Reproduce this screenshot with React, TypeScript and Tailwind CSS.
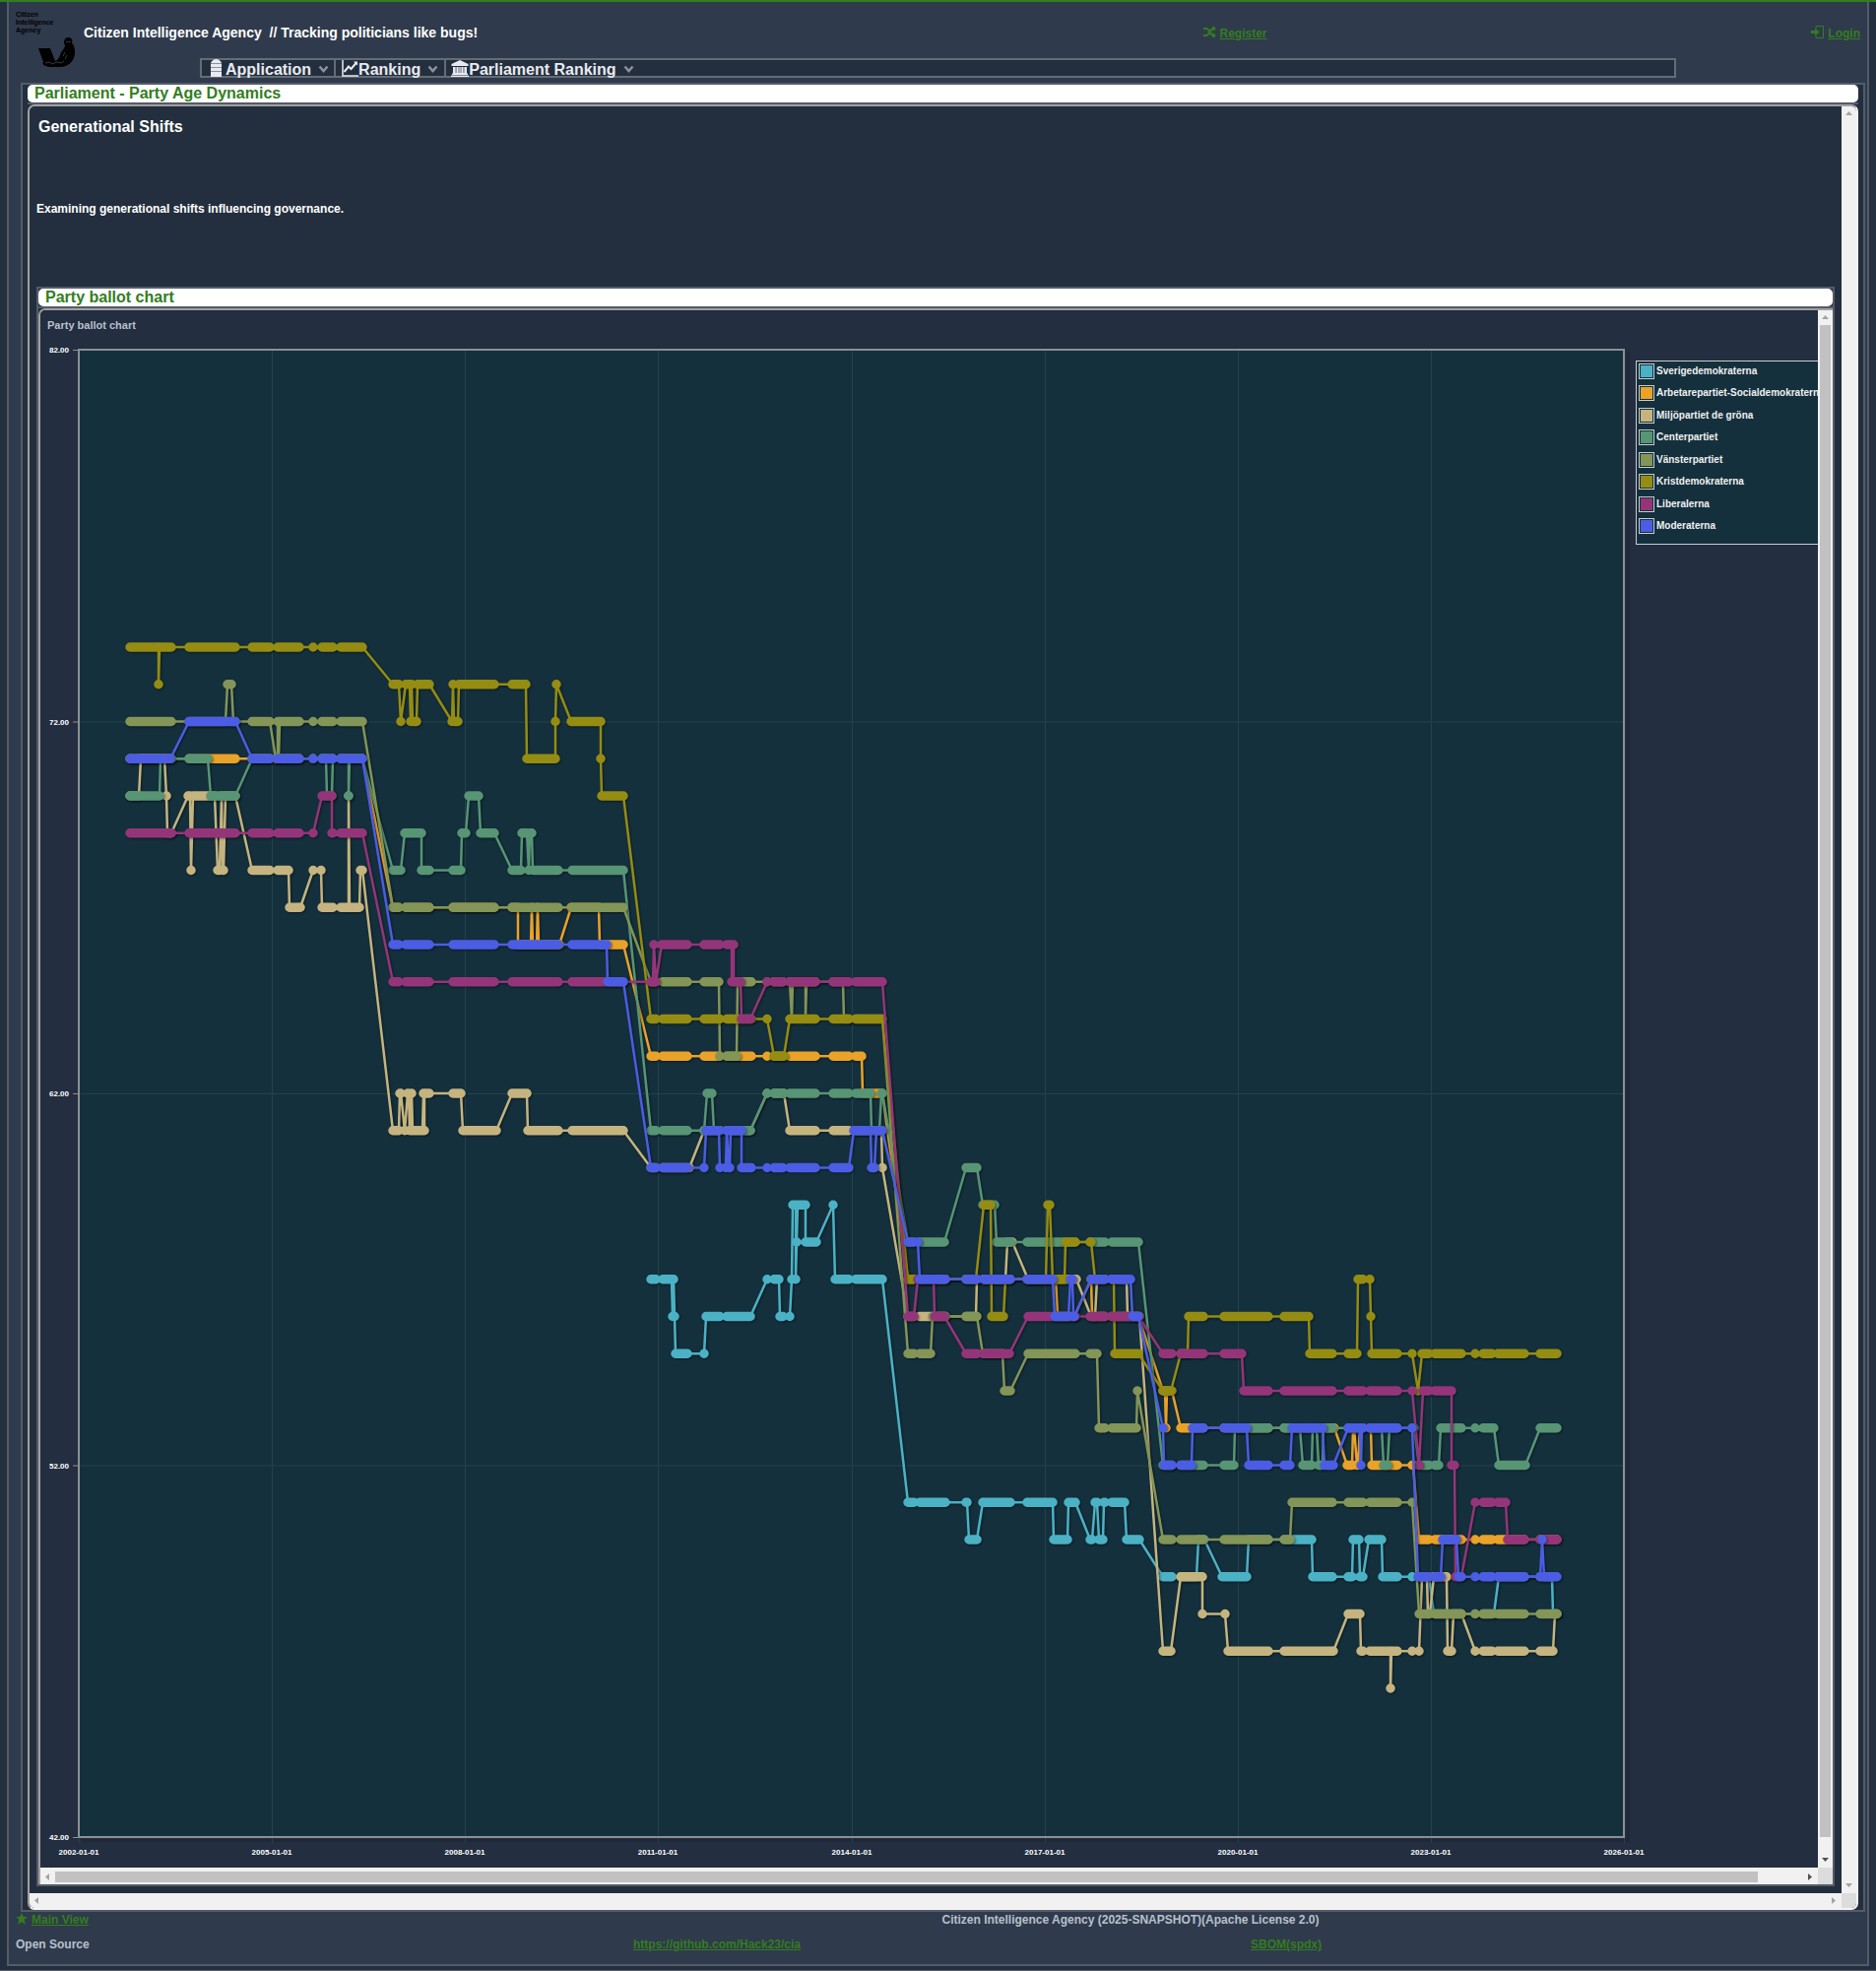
import type { ReactNode } from "react";

type Run = [from: number, to: number, age: number];

interface Series {
  name: string;
  color: string;
  swatch: string;
  runs: Run[];
}

/* Stretches of the time axis in which the parliament was in session. */
const SESSIONS: [number, number][] = [
  [132, 174], [192, 239], [256, 274], [282, 304], [318, 318], [327, 338], [346, 369],
  [399, 405], [412, 436], [460, 502], [520, 567], [581, 633],
  [661, 666], [673, 698], [715, 731], [738, 763], [779, 779], [786, 795], [802, 828],
  [846, 862], [869, 896], [922, 928], [934, 960], [981, 992], [999, 1026], [1043, 1092],
  [1107, 1122], [1129, 1157], [1181, 1190], [1199, 1222], [1243, 1288], [1304, 1353],
  [1369, 1384], [1391, 1419], [1434, 1434], [1441, 1451], [1457, 1484], [1498, 1498],
  [1506, 1515], [1521, 1548], [1564, 1582],
];

const SERIES: Series[] = [
  {
    name: "Sverigedemokraterna",
    color: "#4bb2c5",
    swatch: "bg-[#4bb2c5]",
    runs: [
      [661, 682, 57], [683, 683, 56], [684, 684, 57], [685, 685, 56], [686, 715, 55], [717, 762, 56],
      [779, 791, 57], [792, 802, 56], [804, 804, 57], [805, 808, 59], [808, 808, 57], [809, 809, 58],
      [810, 818, 59], [818, 829, 58], [846, 846, 59], [848, 896, 57], [922, 982, 51], [984, 992, 50],
      [998, 1069, 51], [1070, 1084, 50], [1085, 1092, 51], [1107, 1109, 50], [1112, 1114, 51],
      [1116, 1120, 50], [1121, 1142, 51], [1144, 1157, 50], [1181, 1215, 49], [1217, 1223, 50],
      [1241, 1266, 49], [1268, 1332, 50], [1333, 1373, 49], [1374, 1380, 50], [1381, 1384, 49],
      [1390, 1403, 50], [1404, 1451, 49], [1456, 1517, 48], [1522, 1576, 49], [1577, 1581, 48],
    ],
  },
  {
    name: "Arbetarepartiet-Socialdemokraterna",
    color: "#eaa228",
    swatch: "bg-[#eaa228]",
    runs: [
      [132, 368, 71], [399, 526, 67], [526, 539, 66], [540, 540, 67], [541, 545, 66], [546, 546, 67],
      [547, 568, 66], [580, 608, 67], [609, 633, 66], [661, 875, 63], [876, 896, 62], [922, 1072, 57],
      [1074, 1091, 56], [1108, 1108, 57], [1109, 1156, 56], [1181, 1183, 54], [1184, 1184, 53],
      [1185, 1190, 54], [1199, 1355, 53], [1368, 1373, 52], [1374, 1375, 53], [1378, 1379, 52],
      [1381, 1392, 53], [1393, 1435, 52], [1441, 1581, 50],
    ],
  },
  {
    name: "Miljöpartiet de gröna",
    color: "#c5b47f",
    swatch: "bg-[#c5b47f]",
    runs: [
      [132, 141, 70], [143, 167, 71], [169, 169, 70], [170, 174, 69], [191, 193, 70], [194, 194, 68],
      [196, 218, 70], [221, 223, 68], [225, 225, 70], [226, 227, 68], [229, 239, 70], [256, 293, 68],
      [294, 305, 67], [318, 326, 68], [327, 354, 67], [354, 354, 70], [355, 365, 67], [366, 368, 68],
      [399, 405, 61], [406, 407, 62], [411, 411, 61], [414, 415, 62], [416, 416, 61], [418, 418, 62],
      [419, 429, 61], [430, 430, 62], [431, 431, 61], [431, 468, 62], [470, 504, 61], [520, 535, 62],
      [536, 633, 61], [661, 700, 60], [715, 762, 61], [779, 796, 62], [802, 895, 61], [896, 896, 60],
      [922, 991, 56], [992, 1021, 57], [1023, 1028, 58], [1044, 1093, 57], [1108, 1112, 56],
      [1114, 1144, 57], [1145, 1157, 56], [1181, 1189, 47], [1199, 1221, 49], [1221, 1221, 48],
      [1244, 1244, 48], [1247, 1354, 47], [1369, 1381, 48], [1382, 1412, 47], [1412, 1412, 46],
      [1413, 1441, 47], [1444, 1449, 49], [1450, 1452, 48], [1456, 1469, 49], [1470, 1474, 47],
      [1476, 1484, 48], [1498, 1577, 47], [1579, 1581, 48],
    ],
  },
  {
    name: "Centerpartiet",
    color: "#579575",
    swatch: "bg-[#579575]",
    runs: [
      [132, 162, 70], [163, 211, 71], [214, 239, 70], [256, 331, 71], [332, 337, 70], [338, 354, 71],
      [354, 354, 70], [355, 368, 71], [399, 407, 68], [411, 428, 69], [428, 468, 68], [469, 473, 69],
      [476, 486, 70], [488, 502, 69], [520, 529, 68], [530, 535, 69], [537, 537, 68], [538, 540, 69],
      [541, 633, 68], [661, 715, 61], [718, 723, 62], [725, 762, 61], [779, 884, 62], [885, 893, 61],
      [895, 896, 62], [922, 959, 58], [981, 992, 60], [998, 1010, 59], [1012, 1156, 58],
      [1181, 1253, 52], [1254, 1320, 53], [1323, 1332, 52], [1333, 1337, 53], [1339, 1343, 52],
      [1344, 1403, 53], [1405, 1409, 52], [1411, 1436, 53], [1441, 1461, 52], [1463, 1517, 53],
      [1522, 1549, 52], [1564, 1581, 53],
    ],
  },
  {
    name: "Vänsterpartiet",
    color: "#839557",
    swatch: "bg-[#839557]",
    runs: [
      [132, 229, 72], [231, 235, 73], [237, 274, 72], [280, 282, 71], [282, 282, 72], [283, 283, 71],
      [284, 368, 72], [399, 633, 67], [661, 730, 65], [731, 748, 63], [749, 802, 65], [804, 804, 64],
      [805, 818, 65], [818, 818, 64], [819, 856, 65], [857, 896, 64], [922, 945, 55], [947, 992, 56],
      [998, 1018, 55], [1020, 1026, 54], [1044, 1114, 55], [1116, 1154, 53], [1155, 1155, 54],
      [1181, 1310, 50], [1312, 1434, 51], [1441, 1581, 48],
    ],
  },
  {
    name: "Kristdemokraterna",
    color: "#958c12",
    swatch: "bg-[#958c12]",
    runs: [
      [132, 161, 74], [161, 161, 73], [162, 368, 74], [399, 405, 73], [407, 407, 72], [412, 416, 73],
      [417, 417, 72], [418, 418, 73], [419, 423, 72], [424, 436, 73], [459, 459, 72], [460, 460, 73],
      [461, 465, 72], [466, 534, 73], [535, 564, 71], [564, 564, 72], [565, 565, 73], [580, 610, 72],
      [610, 610, 71], [611, 633, 70], [661, 779, 64], [786, 796, 63], [802, 896, 64], [922, 991, 57],
      [999, 1006, 59], [1007, 1019, 56], [1021, 1062, 57], [1064, 1066, 59], [1069, 1081, 57],
      [1082, 1108, 58], [1112, 1131, 57], [1132, 1156, 55], [1181, 1189, 54], [1199, 1206, 55],
      [1207, 1329, 56], [1330, 1378, 55], [1379, 1391, 57], [1392, 1392, 56], [1393, 1434, 55],
      [1440, 1440, 54], [1444, 1581, 55],
    ],
  },
  {
    name: "Liberalerna",
    color: "#953579",
    swatch: "bg-[#953579]",
    runs: [
      [132, 318, 69], [327, 337, 70], [337, 368, 69], [399, 663, 65], [664, 664, 66], [666, 666, 65],
      [672, 743, 66], [743, 743, 65], [745, 745, 66], [745, 752, 65], [753, 762, 64], [779, 896, 65],
      [922, 928, 56], [932, 948, 57], [949, 959, 56], [981, 1025, 55], [1044, 1156, 56],
      [1181, 1261, 55], [1263, 1434, 54], [1441, 1441, 52], [1445, 1474, 54], [1474, 1477, 52],
      [1478, 1484, 49], [1498, 1529, 51], [1531, 1581, 50],
    ],
  },
  {
    name: "Moderaterna",
    color: "#4b5de4",
    swatch: "bg-[#4b5de4]",
    runs: [
      [132, 173, 71], [192, 239, 72], [256, 368, 71], [399, 616, 66], [617, 633, 65], [661, 715, 60],
      [717, 730, 61], [731, 737, 60], [738, 738, 61], [740, 741, 60], [742, 753, 61], [753, 862, 60],
      [867, 884, 61], [885, 888, 60], [890, 896, 61], [922, 932, 58], [934, 1069, 57], [1071, 1085, 56],
      [1087, 1089, 57], [1090, 1091, 56], [1108, 1148, 57], [1150, 1156, 56], [1181, 1181, 53],
      [1182, 1210, 52], [1211, 1266, 53], [1268, 1310, 52], [1312, 1343, 53], [1345, 1354, 52],
      [1369, 1381, 53], [1382, 1382, 52], [1383, 1434, 53], [1440, 1463, 49], [1465, 1479, 50],
      [1481, 1564, 49], [1566, 1566, 50], [1568, 1581, 49],
    ],
  },
];

const LEFT = 80;
const RIGHT = 1649;
const TOP = 355;
const BOTTOM = 1865;

const ageToY = (age: number) => TOP + ((82 - age) * (BOTTOM - TOP)) / 40;

const linePath = (runs: Run[]) =>
  runs.map(([a, b, v], i) => `${i ? "L" : "M"}${a} ${ageToY(v)}L${b} ${ageToY(v)}`).join("");

const markerPath = (runs: Run[]) =>
  runs
    .map(([a, b, v]) => {
      const y = ageToY(v);
      const ends = `M${a} ${y}h0.01M${b} ${y}h0.01`;
      const spans = SESSIONS.map(([s, e]) => {
        const from = Math.max(a, s);
        const to = Math.min(b, e);
        return to >= from ? `M${from} ${y}H${to + 0.01}` : "";
      }).join("");
      return ends + spans;
    })
    .join("");

const X_TICKS = [2002, 2005, 2008, 2011, 2014, 2017, 2020, 2023, 2026];
const Y_TICKS = [82, 72, 62, 52, 42];
const tickX = (year: number) => Math.round(LEFT + ((year - 2002) * (RIGHT - LEFT)) / 24);

function Plot() {
  return (
    <svg
      viewBox="41 342 1619 1554"
      role="img"
      aria-label="Party ballot chart"
      className="block h-auto min-w-0 flex-1 overflow-visible font-bold"
    >
      <g fill="none" stroke="#000" strokeOpacity="0.12">
        <path d="M82 1867.5H1652.5V356M83 1868.5H1653.5V357M84 1869.5H1654.5V358" />
      </g>
      <rect x={LEFT} y={TOP} width={RIGHT - LEFT} height={BOTTOM - TOP} fill="#14303d" />
      {X_TICKS.map((year) => (
        <path key={year} d={`M${tickX(year) + 0.5} ${TOP}V1871`} stroke="#23434b" />
      ))}
      {Y_TICKS.map((age) => (
        <path key={age} d={`M${LEFT} ${ageToY(age) + 0.5}H${RIGHT}`} stroke="#23434b" />
      ))}
      <rect
        x={LEFT}
        y={TOP}
        width={RIGHT - LEFT}
        height={BOTTOM - TOP}
        fill="none"
        stroke="#8c9092"
        strokeWidth="2"
      />
      {Y_TICKS.map((age) => (
        <path key={age} d={`M74 ${ageToY(age) + 0.5}H79`} stroke="#8c9092" />
      ))}
      {SERIES.map((s) => (
        <g
          key={s.name}
          fill="none"
          stroke={s.color}
          strokeLinecap="round"
          strokeLinejoin="round"
          className="drop-shadow-[1px_1px_1px_rgba(0,0,0,0.45)]"
        >
          <path d={linePath(s.runs)} strokeWidth="2.5" />
          <path d={markerPath(s.runs)} strokeWidth="9.5" />
        </g>
      ))}
      <g fill="#fff" fontSize="8">
        {Y_TICKS.map((age) => (
          <text key={age} x="70" y={ageToY(age) + 3} textAnchor="end">
            {age}.00
          </text>
        ))}
        {X_TICKS.map((year) => (
          <text key={year} x={tickX(year)} y="1883" textAnchor="middle">
            {year}-01-01
          </text>
        ))}
      </g>
    </svg>
  );
}

function Legend() {
  return (
    <ul className="mt-6 h-[187px] w-[200px] shrink-0 border border-[#ccc] bg-[#14303d] pt-[2px] pl-[2px] text-[10px] leading-[15px] font-bold text-[#f0f0f0]">
      {SERIES.map((s, i) => (
        <li key={s.name} className={i % 2 ? "flex h-[23px] gap-[2px]" : "flex h-[22px] gap-[2px]"}>
          <span className="size-4 shrink-0 border border-[#ccc] p-px">
            <span className={`block size-full ${s.swatch}`} />
          </span>
          <span className="whitespace-nowrap">{s.name}</span>
        </li>
      ))}
    </ul>
  );
}

function Arrow({ dir, active }: { dir: "up" | "down" | "left" | "right"; active?: boolean }) {
  const d = {
    up: "M4 9L7.500 5L11 9Z",
    down: "M4 5H11L7.500 9Z",
    left: "M9 4V11L5 7.500Z",
    right: "M5 4V11L9 7.500Z",
  }[dir];
  return (
    <svg viewBox="0 0 15 15" className="size-[15px] shrink-0" aria-hidden="true">
      <path d={d} fill={active ? "#505050" : "#a3a3a3"} />
    </svg>
  );
}

function PanelTitle({ children }: { children: ReactNode }) {
  return (
    <h2 className="h-[18px] rounded-[5px] bg-white pl-[7px] text-base leading-[17px] font-bold text-[#337d1e]">
      {children}
    </h2>
  );
}

/* Titled panel whose body carries a vertical and a horizontal scroll bar. */
function ScrollPanel({
  title,
  thumbs,
  rounded,
  className,
  children,
}: {
  title: string;
  thumbs?: boolean;
  rounded?: boolean;
  className: string;
  children: ReactNode;
}) {
  return (
    <section className={`border-2 border-[#545b69] bg-[#232f3e] ${className}`}>
      <PanelTitle>{title}</PanelTitle>
      <div className="h-[2px] bg-[#545b69]" />
      <div
        className={
          rounded
            ? "overflow-hidden rounded-[7px] border-2 border-[#a0a0a0] border-r-[#f4f4f4] border-b-[#f4f4f4]"
            : "overflow-hidden rounded-tl-[7px] border-t-2 border-l-2 border-[#a0a0a0]"
        }
      >
        <div className="grid grid-cols-[minmax(0,1fr)_15px]">
          <div className="min-w-0 overflow-hidden">{children}</div>
          <div className="flex flex-col bg-[#f1f1f1]">
            <Arrow dir="up" />
            <div className="flex flex-1 flex-col px-[2px] pb-4">
              {thumbs && <div className="flex-1 bg-[#c1c1c1]" />}
            </div>
            <Arrow dir="down" active={thumbs} />
          </div>
          <div className={thumbs ? "flex h-[17px] items-end bg-[#f1f1f1]" : "flex h-[15px] bg-[#f1f1f1]"}>
            <Arrow dir="left" />
            <div className="flex h-[15px] flex-1 py-[2px] pr-[46px]">
              {thumbs && <div className="flex-1 bg-[#c1c1c1]" />}
            </div>
            <Arrow dir="right" active={thumbs} />
          </div>
          <div className="bg-[#dcdcdc]" />
        </div>
      </div>
    </section>
  );
}

function Logo() {
  return (
    <svg viewBox="0 0 62 62" className="size-[62px] shrink-0" role="img" aria-label="Citizen Intelligence Agency">
      <g fontSize="7" fontWeight="bold" fill="#000">
        <text x="0" y="7">Citizen</text>
        <text x="0" y="15">Intelligence</text>
        <text x="0" y="23">Agency</text>
      </g>
      <path
        d="M23 39H35L40 52C43 51 44 48 45 46C46 42 50 39 50 36C48 33 49 28 53.500 28C57 28 58 31 57 34C59 35 60 39 60 44C60 50 55 57 47 58H35C29 58 26 54 28 53Z"
        fill="#000"
      />
      <path d="M51 33C53 32 55 32 56 33M30 54L34 53L37 55L42 53L46 54L49 52M50 43L48 47M52 46L50 50" stroke="#56606e" strokeWidth="0.6" fill="none" />
    </svg>
  );
}

function DatabaseIcon() {
  return (
    <svg viewBox="0 0 11 18" className="h-[18px] w-[11px]" aria-hidden="true">
      <path d="M0 4Q2 0 5.500 0T11 4V18H0Z" fill="#e8eaf0" />
      <path d="M0 4.500H11M0 8.500H11M0 12.500H11" stroke="#8b919b" fill="none" />
    </svg>
  );
}

function ChartIcon() {
  return (
    <svg viewBox="0 0 17 17" className="size-[17px]" aria-hidden="true" fill="none" stroke="#e8eaf0">
      <path d="M1 0V16H17" strokeWidth="1.500" />
      <path d="M2.500 12L7 6.500L9.500 9L15 2.500" strokeWidth="2" />
      <path d="M12 1.500H16V5.500Z" fill="#e8eaf0" stroke="none" />
    </svg>
  );
}

function ParliamentIcon() {
  return (
    <svg viewBox="0 0 18 17" className="h-[17px] w-[18px]" aria-hidden="true">
      <path
        d="M9 0L17.500 4V6H0.500V4ZM2 7H4V13H5.500V7H7V13H8.300V7H9.700V13H11V7H12.500V13H14V7H16V13.500H17V15H1V13.500H2ZM0 15.500H18V17H0Z"
        fill="#e8eaf0"
      />
      <path d="M4 7H5.500V13H4ZM7 7H8.300V13H7ZM9.700 7H11V13H9.700ZM12.500 7H14V13H12.500Z" fill="#a5abb5" />
    </svg>
  );
}

function Chevron() {
  return (
    <svg viewBox="0 0 11 8" className="mt-[2px] ml-[7px] h-2 w-[11px]" aria-hidden="true">
      <path d="M1.500 1.500L5.500 6L9.500 1.500" fill="none" stroke="#8b929c" strokeWidth="2.500" />
    </svg>
  );
}

function ShuffleIcon() {
  return (
    <svg viewBox="0 0 13 13" className="mb-1 h-[13px] w-[13px]" aria-hidden="true">
      <path d="M0 3H3C6 3 7 10 10 10H11M0 10H3C6 10 7 3 10 3H11" fill="none" stroke="#337d1e" strokeWidth="2" />
      <path d="M9.500 0L13 3L9.500 6ZM9.500 7L13 10L9.500 13Z" fill="#337d1e" />
    </svg>
  );
}

function LoginIcon() {
  return (
    <svg viewBox="0 0 13 13" className="mb-1 h-[13px] w-[13px]" aria-hidden="true">
      <path d="M5 0.500H12.500V12.500H5V10M5 3V0.500" fill="none" stroke="#337d1e" />
      <path d="M0 5H4V2.500L8.500 6.500L4 10.500V8H0Z" fill="#337d1e" />
    </svg>
  );
}

function StarIcon() {
  return (
    <svg viewBox="0 0 12 12" className="mb-[2px] size-3" aria-hidden="true">
      <path d="M6 0L7.700 4H12L8.600 6.800L9.800 12L6 9L2.200 12L3.400 6.800L0 4H4.300Z" fill="#337d1e" />
    </svg>
  );
}

const LINK = "flex items-center gap-1 text-[#337d1e]";

export default function App() {
  return (
    <div className="min-h-screen border-t-2 border-b-2 border-t-[#337d1e] border-b-[#545b69] bg-[#232f3e] px-[7px] pb-1 font-['Liberation_Sans',Arial,sans-serif] text-[12px] font-bold text-[#b8c0cc]">
      <div className="border-2 border-t-0 border-[#545b69] bg-[#2f3b4c] pb-2">
        <header className="flex h-[57px] items-start pr-[7px] pl-[7px]">
          <div className="h-[57px] w-[69px] shrink-0 pt-2">
            <Logo />
          </div>
          <div className="flex min-w-0 flex-1 items-start pt-[21px]">
            <h1 className="w-[63%] text-[14px] leading-5 whitespace-pre text-white">
              Citizen Intelligence Agency  // Tracking politicians like bugs!
            </h1>
            <a href="#register" className={`${LINK} pt-[2px]`}>
              <ShuffleIcon />
              <span className="underline">Register</span>
            </a>
            <a href="#login" className={`${LINK} ml-auto pt-[2px]`}>
              <LoginIcon />
              <span className="underline">Login</span>
            </a>
          </div>
        </header>

        <nav className="mx-[194px] flex h-5 border-2 border-[#646c75] bg-[#232f3e] text-base leading-4 text-[#e8eaf0]">
          <button type="button" className="flex items-center border-r-2 border-[#646c75] pr-[5px] pl-[9px]">
            <DatabaseIcon />
            <span className="ml-1 pt-[3px]">Application</span>
            <Chevron />
          </button>
          <button type="button" className="flex items-center border-r-2 border-[#646c75] pr-[6px] pl-[6px]">
            <ChartIcon />
            <span className="pt-[3px]">Ranking</span>
            <Chevron />
          </button>
          <button type="button" className="flex items-center pl-[5px]">
            <ParliamentIcon />
            <span className="pt-[3px]">Parliament Ranking</span>
            <Chevron />
          </button>
        </nav>

        <main className="mt-[5px] pr-[2px] pl-3">
          <ScrollPanel title="Parliament - Party Age Dynamics" rounded className="px-[5px]">
            <div className="px-[7px] pb-[7px]">
              <h2 className="pt-[11px] pl-[2px] text-base leading-5 text-white">Generational Shifts</h2>
              <p className="pt-[65px] pb-[71px] leading-4 text-white">
                Examining generational shifts influencing governance.
              </p>
              <ScrollPanel title="Party ballot chart" thumbs className="">
                <div className="bg-[#232e40]">
                  <h3 className="h-[27px] pt-[7px] pl-[7px] text-[11px] leading-4">Party ballot chart</h3>
                  <div className="flex items-start">
                    <Plot />
                    <div className="w-[186px] shrink-0 pl-px">
                      <Legend />
                    </div>
                  </div>
                </div>
              </ScrollPanel>
            </div>
          </ScrollPanel>
        </main>

        <footer className="px-[7px] leading-4">
          <div className="grid grid-cols-2 gap-x-2">
            <a href="#main" className={LINK}>
              <StarIcon />
              <span className="underline">Main View</span>
            </a>
            <span>Citizen Intelligence Agency (2025-SNAPSHOT)(Apache License 2.0)</span>
          </div>
          <div className="mt-[9px] grid grid-cols-3 gap-x-2 pb-1">
            <span>Open Source</span>
            <a href="https://github.com/Hack23/cia" className="text-[#337d1e] underline">
              https://github.com/Hack23/cia
            </a>
            <a href="#sbom" className="text-[#337d1e] underline">
              SBOM(spdx)
            </a>
          </div>
        </footer>
      </div>
    </div>
  );
}
